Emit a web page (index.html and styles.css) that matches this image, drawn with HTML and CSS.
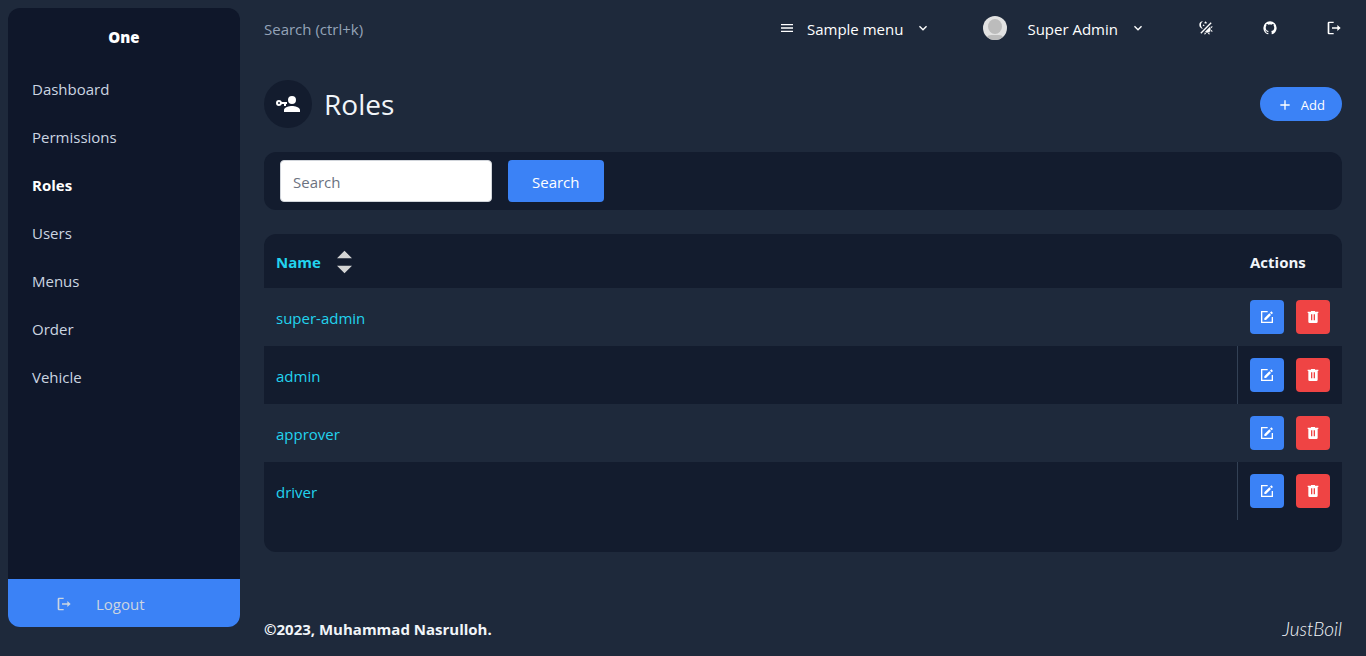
FILE: index.html
```html
<!DOCTYPE html>
<html lang="en">
<head>
<meta charset="utf-8">
<meta name="viewport" content="width=device-width, initial-scale=1">
<title>Roles</title>
<link rel="stylesheet" href="styles.css">
</head>
<body class="layout">
<svg class="sprite" aria-hidden="true">
  <symbol id="menu" viewBox="0 0 24 24"><path d="M3,6H21V8H3V6M3,11H21V13H3V11M3,16H21V18H3V16Z"/></symbol>
  <symbol id="chevron" viewBox="0 0 24 24"><path d="M7.41,8.58L12,13.17L16.59,8.58L18,10L12,16L6,10L7.41,8.58Z"/></symbol>
  <symbol id="logout" viewBox="0 0 24 24"><path d="M4.500,2.500H11.500V4.500H5V19.500H11.500V21.500H4.500Q2.500,21.500 2.500,19.500V4.500Q2.500,2.500 4.500,2.500ZM9,11H17V7.500L22,12L17,16.500V13H9Z"/></symbol>
  <symbol id="theme" viewBox="0 0 24 24"><path d="M7.5,2C5.71,3.15 4.5,5.18 4.5,7.5C4.5,9.82 5.71,11.85 7.53,13C4.46,13 2,10.54 2,7.5A5.5,5.5 0 0,1 7.5,2M19.07,3.5L20.5,4.93L4.93,20.5L3.5,19.07L19.07,3.5M12.89,5.93L11.41,5L9.97,6L10.39,4.3L9,3.24L10.75,3.12L11.33,1.47L12,3.1L13.73,3.13L12.38,4.26L12.89,5.93M9.59,9.54L8.43,8.81L7.31,9.59L7.65,8.27L6.56,7.44L7.92,7.35L8.37,6.06L8.88,7.33L10.24,7.36L9.19,8.23L9.59,9.54M19,13.5A5.5,5.5 0 0,1 13.5,19C12.28,19 11.15,18.6 10.24,17.93L17.93,10.24C18.6,11.15 19,12.28 19,13.5M14.6,20.08L17.37,18.93L17.13,22.28L14.6,20.08M18.93,17.38L20.08,14.61L22.28,17.15L18.93,17.38M20.08,12.42L18.94,9.64L22.28,9.88L20.08,12.42M9.63,18.93L12.4,20.08L9.87,22.27L9.63,18.93Z"/></symbol>
  <symbol id="github" viewBox="0 0 24 24"><path d="M12,2A10,10 0 0,0 2,12C2,16.42 4.87,20.17 8.84,21.5C9.34,21.58 9.5,21.27 9.5,21C9.5,20.77 9.5,20.14 9.5,19.31C6.73,19.91 6.14,17.97 6.14,17.97C5.68,16.81 5.03,16.5 5.03,16.5C4.12,15.88 5.1,15.9 5.1,15.9C6.1,15.97 6.63,16.93 6.63,16.93C7.5,18.45 8.97,18 9.54,17.76C9.63,17.11 9.89,16.67 10.17,16.42C7.95,16.17 5.62,15.31 5.62,11.5C5.62,10.39 6,9.5 6.65,8.79C6.55,8.54 6.2,7.5 6.75,6.15C6.75,6.15 7.59,5.88 9.5,7.17C10.29,6.95 11.15,6.84 12,6.84C12.85,6.84 13.71,6.95 14.5,7.17C16.41,5.88 17.25,6.15 17.25,6.15C17.8,7.5 17.45,8.54 17.35,8.79C18,9.5 18.38,10.39 18.38,11.5C18.38,15.32 16.04,16.16 13.81,16.41C14.17,16.72 14.5,17.33 14.5,18.26C14.5,19.6 14.5,20.68 14.5,21C14.5,21.27 14.66,21.59 15.17,21.5C19.14,20.16 22,16.42 22,12A10,10 0 0,0 12,2Z"/></symbol>
  <symbol id="account-key" viewBox="0 0 24 24"><path d="M11,10V12H10V14H8V12H5.83C5.42,13.17 4.31,14 3,14A3,3 0 0,1 0,11A3,3 0 0,1 3,8C4.31,8 5.42,8.83 5.83,10H11M3,10A1,1 0 0,0 2,11A1,1 0 0,0 3,12A1,1 0 0,0 4,11A1,1 0 0,0 3,10M16,14C18.67,14 24,15.34 24,18V20H8V18C8,15.34 13.33,14 16,14M16,12A4,4 0 0,1 12,8A4,4 0 0,1 16,4A4,4 0 0,1 20,8A4,4 0 0,1 16,12Z"/></symbol>
  <symbol id="plus" viewBox="0 0 24 24"><path d="M19,13H13V19H11V13H5V11H11V5H13V11H19V13Z"/></symbol>
  <symbol id="edit" viewBox="0 0 24 24"><path d="M21,12V21H3V3H13V5H5V19H19V12H21M8,16.5V14L15.500,6.500L18,9L10.500,16.500H8M16.500,5.500L18.500,3.500L21,6L19,8Z"/></symbol>
  <symbol id="trash" viewBox="0 0 24 24"><path fill-rule="evenodd" d="M9,3H15V4H20V6H19V19A2,2 0 0,1 17,21H7A2,2 0 0,1 5,19V6H4V4H9V3M9,8V17H11V8H9M13,8V17H15V8H13Z"/></symbol>
</svg>

<aside class="sidebar">
  <div class="brand">One</div>
  <nav class="side-nav" aria-label="Main">
    <a class="side-link" href="#">Dashboard</a>
    <a class="side-link" href="#">Permissions</a>
    <a class="side-link active" href="#" aria-current="page">Roles</a>
    <a class="side-link" href="#">Users</a>
    <a class="side-link" href="#">Menus</a>
    <a class="side-link" href="#">Order</a>
    <a class="side-link" href="#">Vehicle</a>
  </nav>
  <a class="side-logout" href="#"><svg class="icon"><use href="#logout"/></svg>Logout</a>
</aside>

<div class="page">
  <header class="topbar">
    <input class="top-search" type="text" placeholder="Search (ctrl+k)" aria-label="Search (ctrl+k)">
    <button class="top-menu sample" type="button"><svg class="icon"><use href="#menu"/></svg><span>Sample menu</span><svg class="icon"><use href="#chevron"/></svg></button>
    <button class="top-menu user" type="button">
      <svg class="avatar" viewBox="0 0 24 24"><defs><clipPath id="disc"><circle cx="12" cy="12" r="12"/></clipPath></defs><g clip-path="url(#disc)"><path fill="#e2e2e2" d="M0 0h24v24H0z"/><ellipse cx="12" cy="10.500" rx="7" ry="7.500" fill="#bcbcbc"/><path fill="#bcbcbc" d="M4 24v-3q1-2 4-2h8q3 0 4 2v3z"/></g></svg>
      <span>Super Admin</span><svg class="icon"><use href="#chevron"/></svg></button>
    <button class="top-icon" type="button" aria-label="Light/Dark"><svg class="icon"><use href="#theme"/></svg></button>
    <a class="top-icon" href="#" aria-label="GitHub"><svg class="icon"><use href="#github"/></svg></a>
    <button class="top-icon" type="button" aria-label="Log out"><svg class="icon"><use href="#logout"/></svg></button>
  </header>

  <main class="content">
    <section class="title-row">
      <span class="title-icon"><svg class="icon-large"><use href="#account-key"/></svg></span>
      <h1 class="title">Roles</h1>
      <a class="add" href="#"><svg class="icon"><use href="#plus"/></svg>Add</a>
    </section>

    <form class="card search-card">
      <input class="search-input" type="search" placeholder="Search" aria-label="Search">
      <button class="search-button" type="button">Search</button>
    </form>

    <div class="card table-card">
      <table class="roles">
        <thead>
          <tr><th><a class="sort" href="#">Name<svg class="sort-icon" viewBox="0 0 16 24"><path d="M8 0l8 8H0zM0 16h16l-8 8z"/></svg></a></th><th class="actions">Actions</th></tr>
        </thead>
        <tbody>
          <tr><td><a class="role" href="#">super-admin</a></td><td class="actions"><div class="buttons"><a class="action edit" href="#" aria-label="Edit"><svg class="icon"><use href="#edit"/></svg></a><button class="action delete" type="button" aria-label="Delete"><svg class="icon"><use href="#trash"/></svg></button></div></td></tr>
          <tr><td><a class="role" href="#">admin</a></td><td class="actions"><div class="buttons"><a class="action edit" href="#" aria-label="Edit"><svg class="icon"><use href="#edit"/></svg></a><button class="action delete" type="button" aria-label="Delete"><svg class="icon"><use href="#trash"/></svg></button></div></td></tr>
          <tr><td><a class="role" href="#">approver</a></td><td class="actions"><div class="buttons"><a class="action edit" href="#" aria-label="Edit"><svg class="icon"><use href="#edit"/></svg></a><button class="action delete" type="button" aria-label="Delete"><svg class="icon"><use href="#trash"/></svg></button></div></td></tr>
          <tr><td><a class="role" href="#">driver</a></td><td class="actions"><div class="buttons"><a class="action edit" href="#" aria-label="Edit"><svg class="icon"><use href="#edit"/></svg></a><button class="action delete" type="button" aria-label="Delete"><svg class="icon"><use href="#trash"/></svg></button></div></td></tr>
        </tbody>
      </table>
    </div>
  </main>

  <footer class="footer"><b>©2023, Muhammad Nasrulloh.</b><a class="maker" href="#">JustBoil</a></footer>
</div>
</body>
</html>
```
FILE: styles.css
```css
*, *::before, *::after { box-sizing: border-box; }

.layout {
  display: flex;
  min-height: 100vh;
  margin: 0;
  background: #1e293b;
  color: #f1f5f9;
  font: 15px/24px "Segoe UI", "Open Sans", "Noto Sans", sans-serif;
}

a { color: inherit; text-decoration: none; }
button, input { font: inherit; color: inherit; }
button { padding: 0; border: 0; background: none; cursor: pointer; }

.sprite { position: absolute; width: 0; height: 0; }
.icon { flex: none; width: 16px; height: 16px; fill: currentColor; }
.icon-large { width: 24px; height: 24px; fill: currentColor; }

.sidebar {
  display: flex;
  flex: none;
  flex-direction: column;
  width: 232px;
  margin: 8px 0 29px 8px;
  overflow: hidden;
  border-radius: 12px;
  background: #0f172a;
  color: #cbd5e1;
}
.brand { padding: 17px 0 16px; text-align: center; color: #fff; font-weight: 800; }
.side-nav { display: flex; flex: 1; flex-direction: column; }
.side-link { padding: 12px 24px; }
.side-link.active { color: #fff; font-weight: 700; }
.side-logout {
  display: flex;
  align-items: center;
  gap: 24px;
  padding: 13px 48px 11px;
  background: #3b82f6;
}

.page { display: flex; flex: 1; flex-direction: column; min-width: 0; }
.topbar { display: flex; align-items: center; height: 56px; padding-left: 24px; color: #fff; }
.top-search { flex: 1; min-width: 0; height: 40px; padding: 2px 0 0; border: 0; background: none; }
.top-search::placeholder { color: #94a3b8; opacity: 1; }
.top-menu { display: flex; align-items: center; }
.top-menu span { padding-top: 2px; }
.sample { gap: 12px; margin-right: 52px; }
.user { gap: 12px; margin-right: 28px; }
.avatar { width: 24px; height: 24px; margin-right: 8px; }
.top-icon { display: flex; justify-content: center; width: 64px; }

.content { flex: 1; padding: 24px 24px 0; }
.title-row { display: flex; align-items: center; gap: 12px; margin-bottom: 24px; }
.title-icon {
  display: flex;
  align-items: center;
  justify-content: center;
  width: 48px;
  height: 48px;
  border-radius: 50%;
  background: #131c2e;
  color: #fff;
}
.title { flex: 1; margin: 0; font-size: 28px; font-weight: 400; line-height: 48px; }
.add {
  display: flex;
  align-items: center;
  gap: 8px;
  padding: 6px 17px 4px;
  border-radius: 17px;
  background: #3b82f6;
  color: #fff;
  font-size: 13px;
}

.card { margin-bottom: 24px; border-radius: 12px; background: #131c2e; }
.search-card { display: flex; gap: 16px; padding: 8px 16px; }
.search-input {
  width: 212px;
  height: 42px;
  padding: 2px 12px 0;
  border: 1px solid #d1d5db;
  border-radius: 4px;
  background: #fff;
  color: #111827;
  appearance: none;
}
.search-input::placeholder { color: #6b7280; opacity: 1; }
.search-button { padding: 2px 24px 0; border-radius: 4px; background: #3b82f6; color: #fff; }

.table-card { padding-bottom: 32px; overflow: hidden; }
.roles { width: 100%; border-collapse: collapse; text-align: left; }
.roles th { height: 54px; padding: 2px 12px 0; font-weight: 700; }
.roles th.actions { padding-left: 13px; }
.roles td { height: 58px; padding: 0 12px; }
.roles tbody tr:nth-child(odd) { background: #1e293b; }
.roles .actions { width: 105px; }
.roles td.actions { border-left: 1px solid #1e293b; }
.roles tbody tr:nth-child(even) .actions { border-color: #334155; }
.sort { display: flex; align-items: center; gap: 16px; color: #22d3ee; }
.sort-icon { width: 15px; height: 24px; fill: #d4d4d4; }
.role { display: block; padding-top: 2px; color: #22d3ee; }
.buttons { display: flex; gap: 12px; }
.action {
  display: flex;
  align-items: center;
  justify-content: center;
  width: 34px;
  height: 34px;
  border-radius: 4px;
  color: #fff;
}
.edit { background: #3b82f6; }
.delete { background: #ef4444; }

.footer { display: flex; align-items: center; justify-content: space-between; padding: 8px 24px 11px; }
.maker { font: italic 300 19px/32px "Segoe Script", Lato, cursive; }
```
